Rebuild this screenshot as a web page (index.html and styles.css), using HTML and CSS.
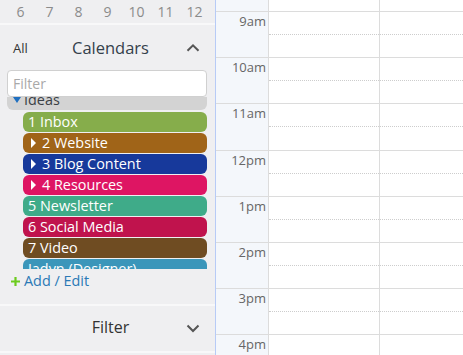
FILE: index.html
```html
<!DOCTYPE html>
<html>
<head>
<meta charset="utf-8">
<link rel="stylesheet" href="styles.css">
</head>
<body>
<div class="app">
  <aside class="sidebar">
    <div class="minical">
      <span>6</span><span>7</span><span>8</span><span>9</span><span>10</span><span>11</span><span>12</span>
    </div>
    <div class="head">
      <span class="all">All</span>
      <span class="title">Calendars</span>
      <span class="caret"><svg width="14" height="9" viewBox="0 0 14 9"><path d="M1.5 7.8 L7 2.3 L12.5 7.8" fill="none" stroke="#555" stroke-width="2"/></svg></span>
    </div>
    <input class="filter" placeholder="Filter">
    <div class="list">
      <div class="list-inner">
        <div class="group"><span class="tri-down"></span>Ideas</div>
        <div class="cal c-inbox">1 Inbox</div>
        <div class="cal c-website has-tri"><span class="tri-right"></span>2 Website</div>
        <div class="cal c-blog has-tri"><span class="tri-right"></span>3 Blog Content</div>
        <div class="cal c-res has-tri"><span class="tri-right"></span>4 Resources</div>
        <div class="cal c-news">5 Newsletter</div>
        <div class="cal c-social">6 Social Media</div>
        <div class="cal c-video">7 Video</div>
        <div class="cal c-jadyn">Jadyn (Designer)</div>
      </div>
    </div>
    <div class="add"><svg class="plus" width="9" height="9" viewBox="0 0 9 9"><path d="M4.5 0 V9 M0 4.5 H9" stroke="#6ccb1e" stroke-width="2.2"/></svg><span>Add / Edit</span></div>
    <div class="head filter-head">
      <span class="all"></span>
      <span class="title ftitle">Filter</span>
      <span class="caret"><svg width="14" height="9" viewBox="0 0 14 9"><path d="M1.5 1.5 L7 7 L12.5 1.5" fill="none" stroke="#555" stroke-width="2"/></svg></span>
    </div>
  </aside>
  <div class="divider"></div>
  <main class="cal-grid">
    <div class="row partial">
      <div class="gutter"></div><div class="slot"></div><div class="slot"></div>
    </div>
    <div class="row"><div class="gutter">9am</div><div class="slot"><div class="half"></div></div><div class="slot"><div class="half"></div></div></div>
    <div class="row"><div class="gutter">10am</div><div class="slot"><div class="half"></div></div><div class="slot"><div class="half"></div></div></div>
    <div class="row"><div class="gutter">11am</div><div class="slot"><div class="half"></div></div><div class="slot"><div class="half"></div></div></div>
    <div class="row"><div class="gutter">12pm</div><div class="slot"><div class="half"></div></div><div class="slot"><div class="half"></div></div></div>
    <div class="row"><div class="gutter">1pm</div><div class="slot"><div class="half"></div></div><div class="slot"><div class="half"></div></div></div>
    <div class="row"><div class="gutter">2pm</div><div class="slot"><div class="half"></div></div><div class="slot"><div class="half"></div></div></div>
    <div class="row"><div class="gutter">3pm</div><div class="slot"><div class="half"></div></div><div class="slot"><div class="half"></div></div></div>
    <div class="row"><div class="gutter">4pm</div><div class="slot"><div class="half"></div></div><div class="slot"><div class="half"></div></div></div>
  </main>
</div>
</body>
</html>
```

FILE: styles.css
```css
* { box-sizing: border-box; }
html, body { margin: 0; padding: 0; }
body {
  font-family: "Open Sans", "Liberation Sans", sans-serif;
  background: #fff;
  overflow: hidden;
}
.app { display: flex; height: 355px; overflow: hidden; }

.sidebar {
  width: 215px;
  flex: none;
  background: #efeff1;
  display: flex;
  flex-direction: column;
}
.divider { width: 1px; flex: none; background: #b7cbf6; }

.minical {
  display: grid;
  grid-template-columns: repeat(7, 29px);
  padding-left: 6px;
  height: 25px;
  border-bottom: 2px solid #f8f8f9;
  font-size: 14px;
  line-height: 23px;
  color: #8b8b8b;
  text-align: center;
}

.head {
  display: flex;
  align-items: center;
  height: 45px;
  flex: none;
  padding: 0 15px 0 13px;
}
.all { width: 40px; font-size: 13px; color: #333; }
.title {
  flex: 1;
  text-align: center;
  font-size: 16.5px;
  color: #34404b;
}
.caret { width: 32px; display: flex; justify-content: flex-end; }
.caret svg { display: block; }

.filter {
  display: block;
  flex: none;
  margin: 0 8px 0 7px;
  width: 200px;
  height: 27px;
  border: 1px solid #d0d0d0;
  border-radius: 4px;
  background: #fff;
  padding: 0 5px;
  font: 14px "Open Sans", sans-serif;
  color: #333;
  outline: none;
}
.filter::placeholder { color: #a9a9a9; }

.list {
  height: 172px;
  flex: none;
  overflow: hidden;
  margin: 0 8px 0 7px;
}
.list-inner {
  margin-top: -7px;
  display: flex;
  flex-direction: column;
  gap: 1px;
}
.group {
  height: 20px;
  line-height: 20px;
  background: #d3d3d3;
  border-radius: 6px;
  padding-left: 6px;
  font-size: 14.4px;
  color: #3a3f45;
  display: flex;
  align-items: center;
  margin-bottom: 1px;
}
.tri-down {
  width: 0; height: 0;
  border-top: 6px solid #1f6fc0;
  border-left: 4.5px solid transparent;
  border-right: 4.5px solid transparent;
  margin-right: 3px;
}
.cal {
  margin-left: 16px;
  height: 20px;
  line-height: 20px;
  border-radius: 6px;
  color: #fff;
  font-size: 14.4px;
  padding-left: 5px;
  display: flex;
  align-items: center;
  white-space: nowrap;
}
.cal.has-tri { padding-left: 8px; }
.tri-right {
  width: 0; height: 0;
  border-left: 5px solid #fff;
  border-top: 5px solid transparent;
  border-bottom: 5px solid transparent;
  margin-right: 6px;
}
.c-inbox { background: #86ad4b; }
.c-website { background: #a06418; }
.c-blog { background: #17399b; }
.c-res { background: #de1563; }
.c-news { background: #3fab89; }
.c-social { background: #c0134d; }
.c-video { background: #6f4c22; }
.c-jadyn { background: #3b96ba; }

.add {
  height: 37px;
  flex: none;
  padding: 2px 0 0 11px;
  border-bottom: 2px solid #f8f8f9;
  display: flex;
  align-items: flex-start;
  line-height: 20px;
  font-size: 14.4px;
  color: #2a79b6;
}
.plus { margin: 6px 4px 0 0; display: block; }

.filter-head {
  height: 47px;
  border-bottom: 2px solid #f8f8f9;
}
.ftitle { font-size: 16px; color: #333; padding-bottom: 3px; }

.cal-grid {
  flex: 1;
  display: flex;
  flex-direction: column;
  overflow: hidden;
}
.row {
  display: grid;
  grid-template-columns: 53px 111px 1fr;
  flex: none;
  height: 46.2px;
  border-top: 1px solid #dcdcdc;
}
.row.partial { height: 11px; border-top: 0; }
.gutter {
  background: #f4f7fb;
  border-right: 1px solid #dcdcdc;
  font-size: 13px;
  line-height: 16px;
  color: #666;
  text-align: right;
  padding: 1px 2px 0 0;
}
.slot { border-right: 1px solid #dcdcdc; }
.slot:last-child { border-right: 0; }
.half { height: 23px; border-bottom: 1px dotted #cdcdcd; }
```
